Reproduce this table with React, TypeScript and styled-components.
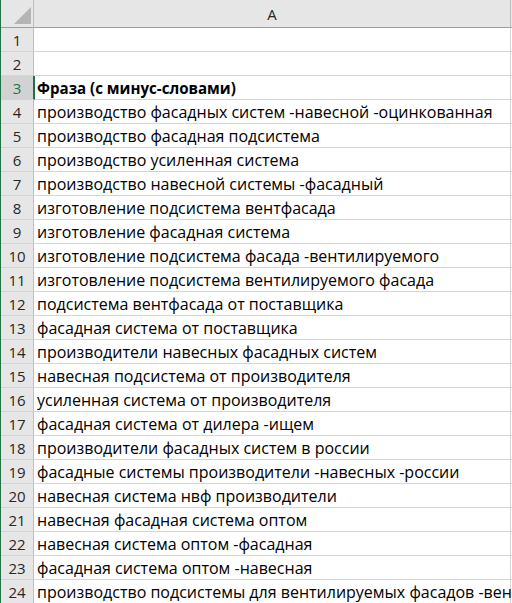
import React from "react"
import styled, { createGlobalStyle } from "styled-components"

const rows: string[] = [
  "",
  "",
  "Фраза (с минус-словами)",
  "производство фасадных систем -навесной -оцинкованная",
  "производство фасадная подсистема",
  "производство усиленная система",
  "производство навесной системы -фасадный",
  "изготовление подсистема вентфасада",
  "изготовление фасадная система",
  "изготовление подсистема фасада -вентилируемого",
  "изготовление подсистема вентилируемого фасада",
  "подсистема вентфасада от поставщика",
  "фасадная система от поставщика",
  "производители навесных фасадных систем",
  "навесная подсистема от производителя",
  "усиленная система от производителя",
  "фасадная система от дилера -ищем",
  "производители фасадных систем в россии",
  "фасадные системы производители -навесных -россии",
  "навесная система нвф производители",
  "навесная фасадная система оптом",
  "навесная система оптом -фасадная",
  "фасадная система оптом -навесная",
  "производство подсистемы для вентилируемых фасадов -вентилируемый",
]

const ACTIVE_ROW = 3

const GlobalStyle = createGlobalStyle`
  html, body {
    margin: 0;
    padding: 0;
    background: #fff;
    overflow: hidden;
  }
`

const Sheet = styled.div`
  width: 512px;
  height: 603px;
  overflow: hidden;
  border-left: 1px solid #217346;
  box-sizing: border-box;
  display: grid;
  grid-template-columns: 33px 477px 1fr;
  grid-auto-rows: 24px;
  grid-template-rows: 28px;
  font-family: "Open Sans", "Liberation Sans", sans-serif;
`

const Corner = styled.div`
  background: #e6e6e6;
  border-right: 1px solid #bfbfbf;
  border-bottom: 1px solid #9e9e9e;
  box-sizing: border-box;
  display: flex;
  align-items: flex-end;
  justify-content: flex-end;
  padding: 0 2px 3px 0;
`

const ColHeader = styled.div`
  background: #e6e6e6;
  border-right: 1px solid #bfbfbf;
  border-bottom: 1px solid #9e9e9e;
  box-sizing: border-box;
  display: flex;
  align-items: center;
  justify-content: center;
  font-size: 15px;
  color: #262626;
  padding-top: 1px;
`

const HeaderFill = styled.div`
  background: #e6e6e6;
  border-bottom: 1px solid #9e9e9e;
`

const RowHeader = styled.div<{ $active?: boolean }>`
  background: ${p => (p.$active ? "#d2d2d2" : "#e6e6e6")};
  color: ${p => (p.$active ? "#217346" : "#262626")};
  border-right: ${p => (p.$active ? "2px solid #217346" : "1px solid #bfbfbf")};
  margin-right: ${p => (p.$active ? "-1px" : "0")};
  border-bottom: 1px solid #d4d4d4;
  box-sizing: border-box;
  display: flex;
  align-items: flex-end;
  justify-content: center;
  font-size: 15px;
  line-height: 21px;
  position: relative;
  z-index: 1;
`

const Cell = styled.div<{ $bold?: boolean }>`
  border-right: 1px solid #d4d4d4;
  border-bottom: 1px solid #d4d4d4;
  box-sizing: border-box;
  padding-left: 3px;
  font-size: ${p => (p.$bold ? "15.1px" : "16px")};
  line-height: 21px;
  font-weight: ${p => (p.$bold ? 700 : 400)};
  color: #000;
  white-space: nowrap;
  overflow: visible;
  display: flex;
  align-items: flex-end;
`

const Rest = styled.div`
  border-bottom: 1px solid #d4d4d4;
`

const App = () => {
  return (
    <>
      <GlobalStyle />
      <Sheet>
        <Corner>
          <svg width="17" height="17" viewBox="0 0 17 17">
            <polygon points="17,0 17,17 0,17" fill="#b4b4b4" />
          </svg>
        </Corner>
        <ColHeader>A</ColHeader>
        <HeaderFill />
        {rows.map((text, i) => (
          <React.Fragment key={i}>
            <RowHeader $active={i + 1 === ACTIVE_ROW}>{i + 1}</RowHeader>
            <Cell $bold={i + 1 === ACTIVE_ROW}>{text}</Cell>
            <Rest />
          </React.Fragment>
        ))}
      </Sheet>
    </>
  )
}

export default App
